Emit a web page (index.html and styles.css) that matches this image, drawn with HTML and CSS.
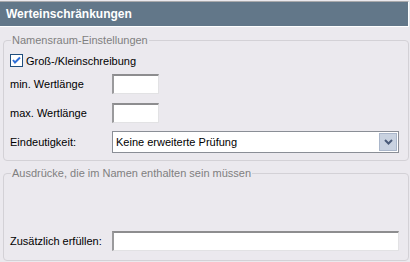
FILE: index.html
```html
<!DOCTYPE html>
<html lang="de">
<head>
<meta charset="utf-8">
<title>Werteinschränkungen</title>
<link rel="stylesheet" href="styles.css">
</head>
<body>
<div class="panel">
  <div class="header">Werteinschränkungen</div>

  <fieldset class="group group-ns">
    <legend class="group-title">Namensraum-Einstellungen</legend>
    <label class="check-row">
      <span class="checkbox">
        <svg width="11" height="11" viewBox="0 0 11 11"><path d="M2 5 L4 7.5 L9 2.5" fill="none" stroke="#2f6fd8" stroke-width="2"/></svg>
      </span>
      <span class="check-label">Groß-/Kleinschreibung</span>
    </label>
    <div class="row row-min">
      <span class="label">min. Wertlänge</span>
      <span class="input input-short"></span>
    </div>
    <div class="row row-max">
      <span class="label">max. Wertlänge</span>
      <span class="input input-short"></span>
    </div>
    <div class="row row-combo">
      <span class="label">Eindeutigkeit:</span>
      <span class="combo">
        <span class="combo-text">Keine erweiterte Prüfung</span>
        <span class="combo-btn">
          <svg width="9" height="6" viewBox="0 0 9 6"><path d="M1 1 L4.5 4.5 L8 1" fill="none" stroke="#4a5a78" stroke-width="2"/></svg>
        </span>
      </span>
    </div>
  </fieldset>

  <fieldset class="group group-expr">
    <legend class="group-title">Ausdrücke, die im Namen enthalten sein müssen</legend>
    <div class="expr-area"></div>
    <div class="row">
      <span class="label">Zusätzlich erfüllen:</span>
      <span class="input input-wide"></span>
    </div>
  </fieldset>
</div>
</body>
</html>
```

FILE: styles.css
```css
html, body {
  margin: 0;
  padding: 0;
}
body {
  background: #ebe9ee;
  font-family: "Liberation Sans", Arial, sans-serif;
  font-size: 11px;
  color: #000;
  width: 410px;
  height: 262px;
  overflow: hidden;
}
.panel {
  display: flex;
  flex-direction: column;
}
.header {
  margin-top: 1px;
  margin-right: 1px;
  border-top: 1px solid #a9a9ab;
  border-bottom: 1px solid #ffffff;
  border-right: 1px solid #ffffff;
  background: #627789;
  color: #fff;
  font-weight: bold;
  font-size: 12px;
  height: 24px;
  line-height: 24px;
  padding-left: 6px;
}
.group {
  margin: 6px 1px 0 3px;
  padding: 0 8px 7px 6px;
  border: 1px solid #d3d1d6;
  border-radius: 4px;
  min-width: 0;
}
.group-title {
  color: #7f7f7f;
  padding: 0 1px;
  margin-left: 1px;
  line-height: 14px;
  height: 14px;
}
.check-row {
  display: flex;
  align-items: center;
  height: 13px;
  margin-top: 7px;
}
.checkbox {
  width: 11px;
  height: 11px;
  border: 1px solid #1f4e7e;
  background: #fff;
  display: flex;
  align-items: center;
  justify-content: center;
}
.check-label {
  margin-left: 3px;
}
.row {
  display: grid;
  grid-template-columns: 102px auto;
  align-items: center;
}
.row-min { margin-top: 7px; }
.row-max { margin-top: 9px; }
.row-combo { margin-top: 8px; }
.input {
  display: block;
  height: 17px;
  background: #fff;
  border-style: solid;
  border-width: 2px 1px 1px 2px;
  border-color: #8d8d8f #e2e2e4 #e2e2e4 #9a9a9c;
  box-sizing: content-box;
}
.input-short { width: 44px; }
.input-wide { width: 284px; }
.combo {
  display: flex;
  align-items: center;
  height: 20px;
  width: 285px;
  background: #fff;
  border: 1px solid #8a8e96;
}
.combo-text {
  flex: 1;
  padding-left: 3px;
}
.combo-btn {
  width: 16px;
  height: 16px;
  margin-right: 1px;
  background: #c9d2e0;
  border: 1px solid #aab6ca;
  display: flex;
  align-items: center;
  justify-content: center;
}
.group-expr {
  margin-top: 5px;
  padding-bottom: 9px;
}
.expr-area {
  height: 51px;
}
```
